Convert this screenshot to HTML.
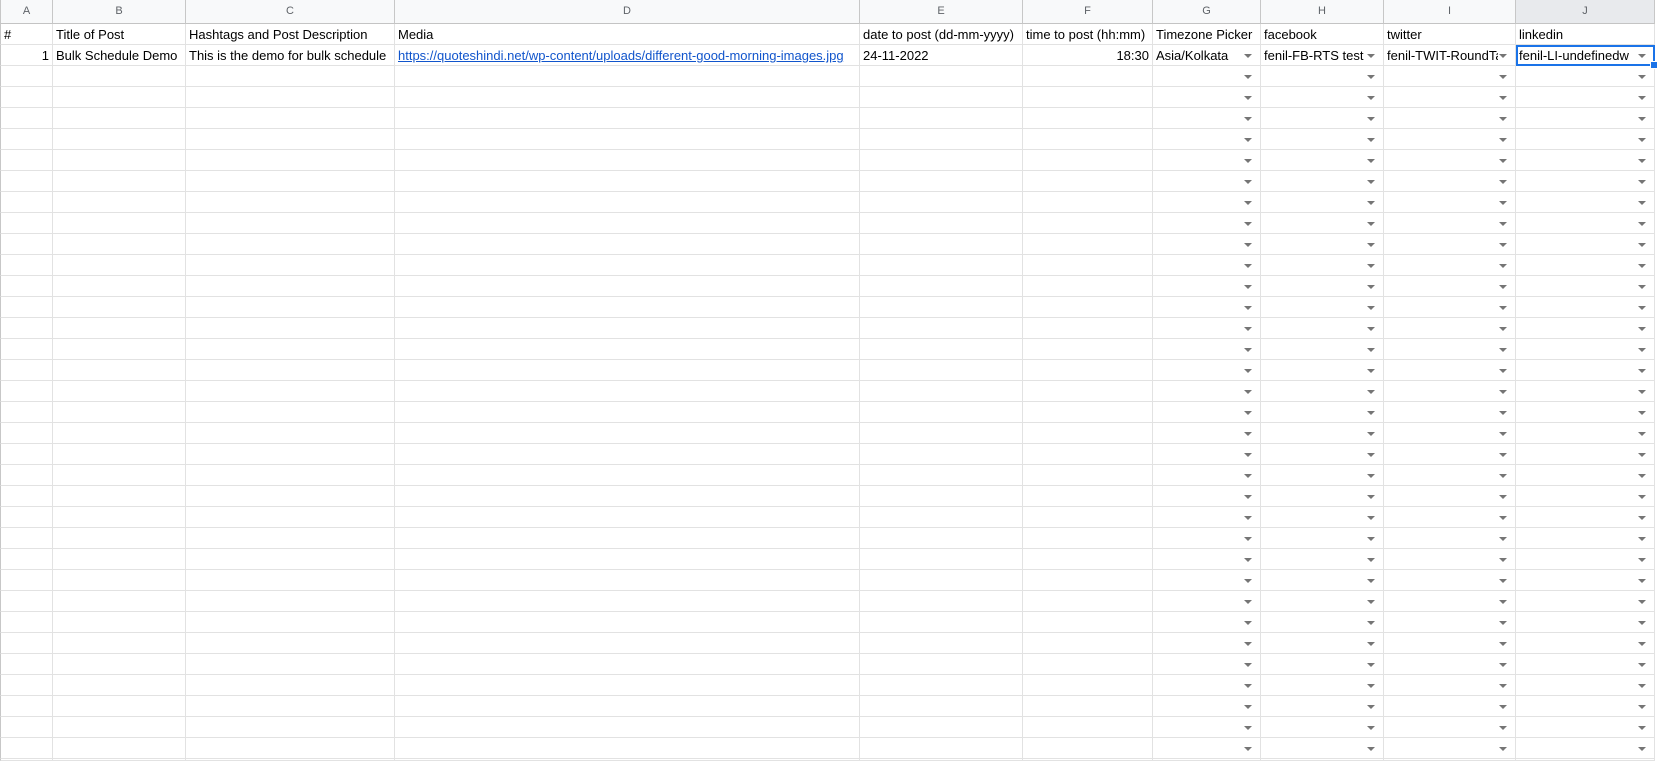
<!DOCTYPE html>
<html><head><meta charset="utf-8"><style>
html,body{margin:0;padding:0;background:#fff;width:1657px;height:761px;overflow:hidden}
.g{display:grid;grid-template-columns:53px 133px 209px 465px 163px 130px 108px 123px 132px 139px 2px;grid-template-rows:24px repeat(35,21px);font-family:"Liberation Sans",Arial,sans-serif;font-size:13px;color:#000}
.g>div{box-sizing:border-box;border-right:1px solid #e2e2e2;border-bottom:1px solid #e2e2e2;padding:1px 3px 0;line-height:20px;white-space:nowrap;overflow:hidden;position:relative}
.g>.h{background:#f8f9fa;border-right:1px solid #c7c7c7;border-bottom:1px solid #c4c4c4;text-align:center;font-size:11px;color:#5f6368;line-height:23px;padding:0}
.g>.hs{background:#e8eaed}
.g>.e{border:none;padding:0}
.g>.a{border-left:1px solid #c7c7c7}
.r{text-align:right}
.t{display:block;overflow:hidden;margin-right:14px}
.d::after{content:"";position:absolute;right:8px;top:9px;border-left:4px solid transparent;border-right:4px solid transparent;border-top:4px solid #757575}
.l{color:#1155cc;text-decoration:underline}
.sel{outline:2px solid #1a73e8;outline-offset:-2px;overflow:visible!important}
.hd{position:absolute;right:-4px;bottom:-4px;width:6px;height:6px;background:#1a73e8;border:1px solid #fff;z-index:2}
</style></head><body>
<div class="g">
<div class="h a">A</div><div class="h">B</div><div class="h">C</div><div class="h">D</div><div class="h">E</div><div class="h">F</div><div class="h">G</div><div class="h">H</div><div class="h">I</div><div class="h hs">J</div><div class="e"></div>
<div class="a">#</div><div>Title of Post</div><div>Hashtags and Post Description</div><div>Media</div><div>date to post (dd-mm-yyyy)</div><div>time to post (hh:mm)</div><div>Timezone Picker</div><div>facebook</div><div>twitter</div><div>linkedin</div><div class="e"></div>
<div class="a r">1</div><div>Bulk Schedule Demo</div><div>This is the demo for bulk schedule</div><div class="l">https://quoteshindi.net/wp-content/uploads/different-good-morning-images.jpg</div><div>24-11-2022</div><div class="r">18:30</div><div class="d"><span class="t">Asia/Kolkata</span></div><div class="d"><span class="t" style="margin-right:8px">fenil-FB-RTS test</span></div><div class="d"><span class="t">fenil-TWIT-RoundTable</span></div><div class="d sel"><span class="t">fenil-LI-undefinedw</span><span class="hd"></span></div><div class="e"></div>
<div class="a"></div><div></div><div></div><div></div><div></div><div></div><div class="d"></div><div class="d"></div><div class="d"></div><div class="d"></div><div class="e"></div>
<div class="a"></div><div></div><div></div><div></div><div></div><div></div><div class="d"></div><div class="d"></div><div class="d"></div><div class="d"></div><div class="e"></div>
<div class="a"></div><div></div><div></div><div></div><div></div><div></div><div class="d"></div><div class="d"></div><div class="d"></div><div class="d"></div><div class="e"></div>
<div class="a"></div><div></div><div></div><div></div><div></div><div></div><div class="d"></div><div class="d"></div><div class="d"></div><div class="d"></div><div class="e"></div>
<div class="a"></div><div></div><div></div><div></div><div></div><div></div><div class="d"></div><div class="d"></div><div class="d"></div><div class="d"></div><div class="e"></div>
<div class="a"></div><div></div><div></div><div></div><div></div><div></div><div class="d"></div><div class="d"></div><div class="d"></div><div class="d"></div><div class="e"></div>
<div class="a"></div><div></div><div></div><div></div><div></div><div></div><div class="d"></div><div class="d"></div><div class="d"></div><div class="d"></div><div class="e"></div>
<div class="a"></div><div></div><div></div><div></div><div></div><div></div><div class="d"></div><div class="d"></div><div class="d"></div><div class="d"></div><div class="e"></div>
<div class="a"></div><div></div><div></div><div></div><div></div><div></div><div class="d"></div><div class="d"></div><div class="d"></div><div class="d"></div><div class="e"></div>
<div class="a"></div><div></div><div></div><div></div><div></div><div></div><div class="d"></div><div class="d"></div><div class="d"></div><div class="d"></div><div class="e"></div>
<div class="a"></div><div></div><div></div><div></div><div></div><div></div><div class="d"></div><div class="d"></div><div class="d"></div><div class="d"></div><div class="e"></div>
<div class="a"></div><div></div><div></div><div></div><div></div><div></div><div class="d"></div><div class="d"></div><div class="d"></div><div class="d"></div><div class="e"></div>
<div class="a"></div><div></div><div></div><div></div><div></div><div></div><div class="d"></div><div class="d"></div><div class="d"></div><div class="d"></div><div class="e"></div>
<div class="a"></div><div></div><div></div><div></div><div></div><div></div><div class="d"></div><div class="d"></div><div class="d"></div><div class="d"></div><div class="e"></div>
<div class="a"></div><div></div><div></div><div></div><div></div><div></div><div class="d"></div><div class="d"></div><div class="d"></div><div class="d"></div><div class="e"></div>
<div class="a"></div><div></div><div></div><div></div><div></div><div></div><div class="d"></div><div class="d"></div><div class="d"></div><div class="d"></div><div class="e"></div>
<div class="a"></div><div></div><div></div><div></div><div></div><div></div><div class="d"></div><div class="d"></div><div class="d"></div><div class="d"></div><div class="e"></div>
<div class="a"></div><div></div><div></div><div></div><div></div><div></div><div class="d"></div><div class="d"></div><div class="d"></div><div class="d"></div><div class="e"></div>
<div class="a"></div><div></div><div></div><div></div><div></div><div></div><div class="d"></div><div class="d"></div><div class="d"></div><div class="d"></div><div class="e"></div>
<div class="a"></div><div></div><div></div><div></div><div></div><div></div><div class="d"></div><div class="d"></div><div class="d"></div><div class="d"></div><div class="e"></div>
<div class="a"></div><div></div><div></div><div></div><div></div><div></div><div class="d"></div><div class="d"></div><div class="d"></div><div class="d"></div><div class="e"></div>
<div class="a"></div><div></div><div></div><div></div><div></div><div></div><div class="d"></div><div class="d"></div><div class="d"></div><div class="d"></div><div class="e"></div>
<div class="a"></div><div></div><div></div><div></div><div></div><div></div><div class="d"></div><div class="d"></div><div class="d"></div><div class="d"></div><div class="e"></div>
<div class="a"></div><div></div><div></div><div></div><div></div><div></div><div class="d"></div><div class="d"></div><div class="d"></div><div class="d"></div><div class="e"></div>
<div class="a"></div><div></div><div></div><div></div><div></div><div></div><div class="d"></div><div class="d"></div><div class="d"></div><div class="d"></div><div class="e"></div>
<div class="a"></div><div></div><div></div><div></div><div></div><div></div><div class="d"></div><div class="d"></div><div class="d"></div><div class="d"></div><div class="e"></div>
<div class="a"></div><div></div><div></div><div></div><div></div><div></div><div class="d"></div><div class="d"></div><div class="d"></div><div class="d"></div><div class="e"></div>
<div class="a"></div><div></div><div></div><div></div><div></div><div></div><div class="d"></div><div class="d"></div><div class="d"></div><div class="d"></div><div class="e"></div>
<div class="a"></div><div></div><div></div><div></div><div></div><div></div><div class="d"></div><div class="d"></div><div class="d"></div><div class="d"></div><div class="e"></div>
<div class="a"></div><div></div><div></div><div></div><div></div><div></div><div class="d"></div><div class="d"></div><div class="d"></div><div class="d"></div><div class="e"></div>
<div class="a"></div><div></div><div></div><div></div><div></div><div></div><div class="d"></div><div class="d"></div><div class="d"></div><div class="d"></div><div class="e"></div>
<div class="a"></div><div></div><div></div><div></div><div></div><div></div><div class="d"></div><div class="d"></div><div class="d"></div><div class="d"></div><div class="e"></div>
<div class="a"></div><div></div><div></div><div></div><div></div><div></div><div class="d"></div><div class="d"></div><div class="d"></div><div class="d"></div><div class="e"></div>
<div class="a"></div><div></div><div></div><div></div><div></div><div></div><div class="d"></div><div class="d"></div><div class="d"></div><div class="d"></div><div class="e"></div>
</div>
</body></html>
